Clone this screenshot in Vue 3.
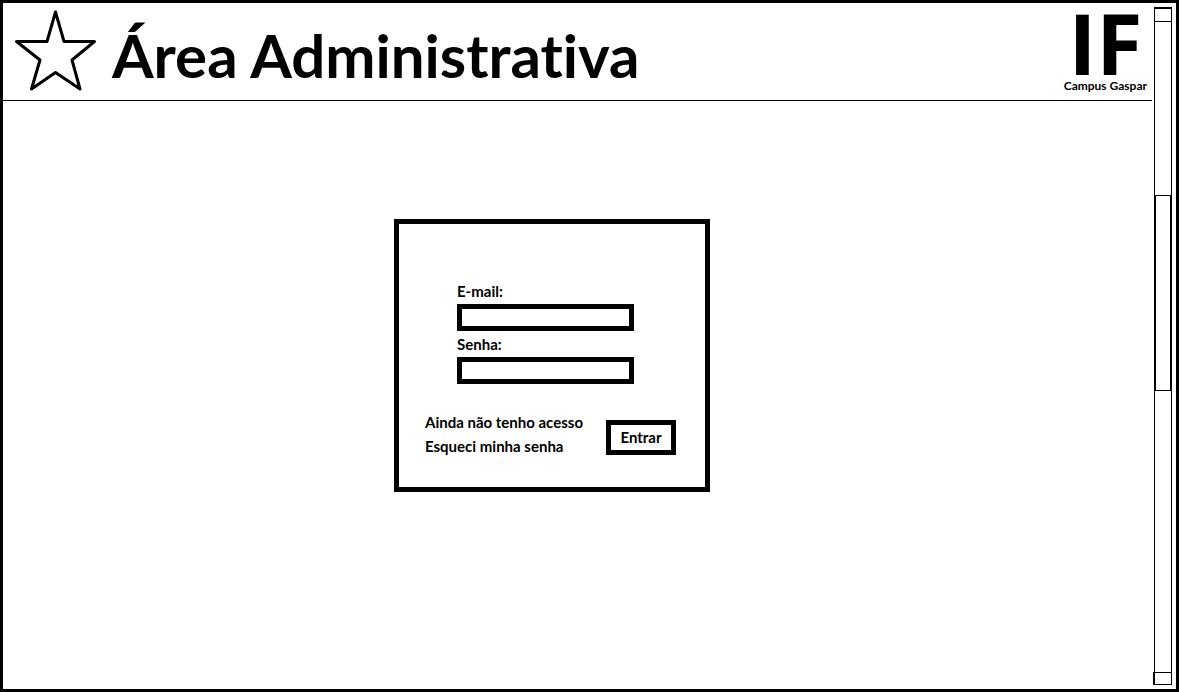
<script setup>
import { ref } from 'vue'

const email = ref('')
const senha = ref('')
</script>

<template>
  <div class="window">
    <div class="page">
      <header class="header">
        <svg class="star" viewBox="0 0 88 88" aria-hidden="true">
          <path d="M43.500 4 L52 33.500 H82.500 L60 52 L68 81 L43.500 64.500 L19.500 81 L28 52 L4.500 33.500 H35 Z" />
        </svg>
        <h1 class="title">Área Administrativa</h1>
        <div class="brand">
          <span class="brand-mark">IF</span>
          <span class="brand-name">Campus Gaspar</span>
        </div>
      </header>
      <main class="main">
        <form class="card" @submit.prevent>
          <div class="fields">
            <label class="label" for="email">E-mail:</label>
            <input id="email" v-model="email" class="input" type="email" />
            <label class="label" for="senha">Senha:</label>
            <input id="senha" v-model="senha" class="input" type="password" />
          </div>
          <div class="actions">
            <nav class="links">
              <a href="#acesso">Ainda não tenho acesso</a>
              <a href="#senha">Esqueci minha senha</a>
            </nav>
            <button class="submit" type="submit">Entrar</button>
          </div>
        </form>
      </main>
    </div>
    <div class="scrollbar">
      <button class="scroll-up" type="button" aria-label="Rolar para cima"></button>
      <div class="track">
        <div class="before"></div>
        <div class="thumb"></div>
        <div class="after"></div>
      </div>
      <button class="scroll-down" type="button" aria-label="Rolar para baixo"></button>
    </div>
  </div>
</template>

<style>
body {
  margin: 0;
  background: #fff;
}
</style>

<style scoped>
* {
  box-sizing: border-box;
}

.window {
  display: flex;
  gap: 1px;
  min-height: 100vh;
  border: 3px solid #000;
  background: #fff;
  color: #000;
  font-family: Lato, "Open Sans", sans-serif;
  font-size: 15px;
  font-weight: 700;
  font-variant-ligatures: none;
}

.page {
  flex: 1;
  min-width: 0;
}

.header {
  display: flex;
  align-items: flex-start;
  height: 98px;
  padding: 5px 5px 0 9px;
  border-bottom: 1px solid #000;
}

.star {
  width: 88px;
  height: 88px;
  flex: none;
}

.star path {
  fill: none;
  stroke: #000;
  stroke-width: 3;
  stroke-linejoin: round;
}

.title {
  margin: 11px 0 0 12px;
  font-size: 60px;
  line-height: 72px;
  font-weight: 700;
  white-space: nowrap;
}

.brand {
  display: flex;
  flex-direction: column;
  align-items: center;
  margin-left: auto;
}

.brand-mark {
  font-family: "Open Sans", sans-serif;
  font-size: 84px;
  line-height: 70px;
  font-weight: 700;
}

.brand-name {
  font-size: 12px;
  line-height: 16px;
  white-space: nowrap;
}

.main {
  display: flex;
  justify-content: center;
  padding: 118px 51px 24px 0;
}

.card {
  width: 316px;
  padding: 58px 29px 28px 26px;
  border: 5px solid #000;
}

.fields {
  display: flex;
  flex-direction: column;
  width: 177px;
  margin-left: 32px;
}

.label {
  height: 26px;
  padding-top: 5px;
  line-height: 16px;
}

.label:first-child {
  height: 22px;
  padding-top: 1px;
}

.input {
  width: 100%;
  height: 27px;
  padding: 0 4px;
  border: 5px solid #000;
  border-radius: 0;
  outline: none;
  background: #fff;
  font: inherit;
  font-size: 12px;
}

.actions {
  display: flex;
  align-items: flex-start;
  justify-content: space-between;
  margin-top: 26px;
}

.links {
  display: flex;
  flex-direction: column;
  line-height: 24px;
  white-space: nowrap;
}

.links a {
  color: inherit;
  text-decoration: none;
}

.submit {
  width: 70px;
  height: 35px;
  margin: 10px 0 4px;
  padding: 0 0 2px;
  border: 5px solid #000;
  background: #fff;
  color: inherit;
  font: inherit;
}

.scrollbar {
  display: flex;
  flex-direction: column;
  width: 19px;
  margin: 4px 4px 4px 0;
}

.scroll-up,
.scroll-down {
  padding: 0;
  border: 1px solid #000;
  border-radius: 0;
  background: #fff;
}

.scroll-up {
  height: 15px;
  margin-left: 1px;
  border-top-width: 2px;
}

.scroll-down {
  height: 13px;
  border-left-width: 2px;
}

.track {
  display: flex;
  flex: 1;
  flex-direction: column;
  margin-left: 1px;
}

.before,
.after {
  border: 0 solid #000;
  border-width: 0 1px;
}

.before {
  flex: 174;
}

.thumb {
  flex: 194;
  border: 1px solid #000;
  border-width: 1px 2px;
}

.after {
  flex: 282;
}
</style>
